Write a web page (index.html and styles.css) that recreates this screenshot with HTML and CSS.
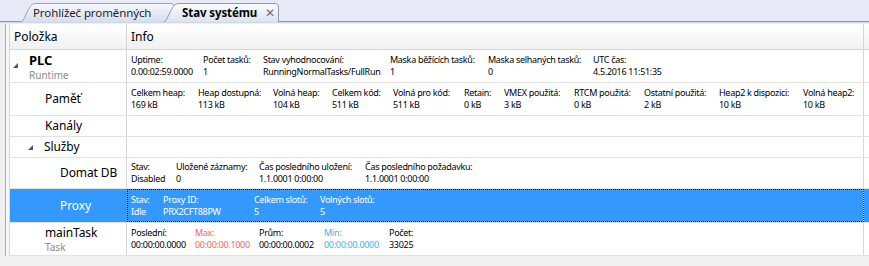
FILE: index.html
```html
<!DOCTYPE html>
<html>
<head lang="cs">
    <meta charset="UTF-8">
    <title>Stav systému</title>
    <link rel="stylesheet" href="styles.css">
</head>
<body>
<div class="tabs">
    <div class="tab tab-vars">
        <svg class="tab-shape" width="155" height="19" viewBox="0 0 155 19">
            <defs>
                <linearGradient id="g1" x1="0" y1="0" x2="0" y2="1">
                    <stop offset="0" stop-color="#f6f8fc"/>
                    <stop offset="1" stop-color="#d6deec"/>
                </linearGradient>
            </defs>
            <path d="M0.5 19 C5 19 8 0.5 15 0.5 H151 Q154.5 0.5 154.5 4 V19" fill="url(#g1)" stroke="#98a3b6"/>
        </svg>
        <span class="tab-text">Prohlížeč proměnných</span>
    </div>
    <div class="tab tab-state">
        <svg class="tab-shape" width="116" height="19" viewBox="0 0 116 19">
            <defs>
                <linearGradient id="g2" x1="0" y1="0" x2="0" y2="1">
                    <stop offset="0" stop-color="#fbfcfe"/>
                    <stop offset="1" stop-color="#dbe3f0"/>
                </linearGradient>
            </defs>
            <path d="M0.5 19 C5 19 8 0.5 15 0.5 H112 Q115.5 0.5 115.5 4 V19" fill="url(#g2)" stroke="#8e99ad"/>
        </svg>
        <span class="tab-text">Stav systému</span>
        <span class="tab-close">✕</span>
    </div>
</div>

<div class="panel">
    <div class="frame">
        <div class="grid">
            <div class="row head">
                <div class="c1">Položka</div>
                <div class="c2">Info</div>
                <div class="c3"></div>
            </div>

            <div class="row r-plc">
                <div class="c1 lv0 top">
                    <span class="exp"><svg width="5" height="5"><path d="M5 0V5H0Z" fill="#555"/></svg></span>
                    <div class="name">
                        <div class="title bold">PLC</div>
                        <div class="sub">Runtime</div>
                    </div>
                </div>
                <div class="c2 info i-plc">
                    <div class="item"><span>Uptime:</span><span>0.00:02:59.0000</span></div>
                    <div class="item"><span>Počet tasků:</span><span>1</span></div>
                    <div class="item"><span>Stav vyhodnocování:</span><span>RunningNormalTasks/FullRun</span></div>
                    <div class="item"><span>Maska běžících tasků:</span><span>1</span></div>
                    <div class="item"><span>Maska selhaných tasků:</span><span>0</span></div>
                    <div class="item"><span>UTC čas:</span><span>4.5.2016 11:51:35</span></div>
                </div>
                <div class="c3"></div>
            </div>

            <div class="row r-mem">
                <div class="c1 lv1"><span class="exp"></span><div class="title">Paměť</div></div>
                <div class="c2 info i-mem">
                    <div class="item"><span>Celkem heap:</span><span>169 kB</span></div>
                    <div class="item"><span>Heap dostupná:</span><span>113 kB</span></div>
                    <div class="item"><span>Volná heap:</span><span>104 kB</span></div>
                    <div class="item"><span>Celkem kód:</span><span>511 kB</span></div>
                    <div class="item"><span>Volná pro kód:</span><span>511 kB</span></div>
                    <div class="item"><span>Retain:</span><span>0 kB</span></div>
                    <div class="item"><span>VMEX použitá:</span><span>3 kB</span></div>
                    <div class="item"><span>RTCM použitá:</span><span>0 kB</span></div>
                    <div class="item"><span>Ostatní použitá:</span><span>2 kB</span></div>
                    <div class="item"><span>Heap2 k dispozici:</span><span>10 kB</span></div>
                    <div class="item"><span>Volná heap2:</span><span>10 kB</span></div>
                </div>
                <div class="c3"></div>
            </div>

            <div class="row r-short">
                <div class="c1 lv1"><span class="exp"></span><div class="title">Kanály</div></div>
                <div class="c2"></div>
                <div class="c3"></div>
            </div>

            <div class="row r-short r-svc">
                <div class="c1 lv0b">
                    <span class="exp"><svg width="5" height="5"><path d="M5 0V5H0Z" fill="#555"/></svg></span>
                    <div class="title">Služby</div>
                </div>
                <div class="c2"></div>
                <div class="c3"></div>
            </div>

            <div class="row r-db">
                <div class="c1 lv2"><span class="exp"></span><div class="title">Domat DB</div></div>
                <div class="c2 info i-db">
                    <div class="item"><span>Stav:</span><span>Disabled</span></div>
                    <div class="item"><span>Uložené záznamy:</span><span>0</span></div>
                    <div class="item"><span>Čas posledního uložení:</span><span>1.1.0001 0:00:00</span></div>
                    <div class="item"><span>Čas posledního požadavku:</span><span>1.1.0001 0:00:00</span></div>
                </div>
                <div class="c3"></div>
            </div>

            <div class="row r-proxy selected">
                <div class="c1 lv2"><span class="exp"></span><div class="title">Proxy</div></div>
                <div class="c2 info i-proxy focus">
                    <div class="item"><span>Stav:</span><span>Idle</span></div>
                    <div class="item"><span>Proxy ID:</span><span>PRX2CFT88PW</span></div>
                    <div class="item"><span>Celkem slotů:</span><span>5</span></div>
                    <div class="item"><span>Volných slotů:</span><span>5</span></div>
                </div>
                <div class="c3"></div>
            </div>

            <div class="row r-task">
                <div class="c1 lv1 top">
                    <span class="exp"></span>
                    <div class="name">
                        <div class="title">mainTask</div>
                        <div class="sub">Task</div>
                    </div>
                </div>
                <div class="c2 info i-task">
                    <div class="item"><span>Poslední:</span><span>00:00:00.0000</span></div>
                    <div class="item max"><span>Max:</span><span>00:00:00.1000</span></div>
                    <div class="item"><span>Prům:</span><span>00:00:00.0002</span></div>
                    <div class="item min"><span>Min:</span><span>00:00:00.0000</span></div>
                    <div class="item"><span>Počet:</span><span>33025</span></div>
                </div>
                <div class="c3"></div>
            </div>
        </div>
    </div>
</div>
</body>
</html>
```

FILE: styles.css
```css
* {
    margin: 0;
    padding: 0;
    box-sizing: border-box;
}
body {
    width: 869px;
    height: 266px;
    overflow: hidden;
    background-color: #f0f0f0;
    font-family: "Noto Sans", "Open Sans", sans-serif;
    color: #000;
}

/* záložky */
.tabs {
    height: 22px;
    display: flex;
    padding-left: 20px;
    background-color: #e8ebf7;
    border-bottom: 1px solid #8f97a8;
}
.tab {
    position: relative;
    height: 19px;
    margin-top: 3px;
    display: flex;
    align-items: center;
    font-size: 11.5px;
    letter-spacing: -0.1px;
    white-space: nowrap;
}
.tab-shape {
    position: absolute;
    left: 0;
    top: 0;
}
.tab-text,
.tab-close {
    position: relative;
}
.tab-vars {
    width: 155px;
    padding-left: 13px;
    color: #1e1e1e;
}
.tab-state {
    width: 116px;
    margin-left: -12px;
    padding-left: 19px;
    font-weight: bold;
}
.tab-close {
    margin-left: 8px;
    font-size: 12px;
    font-weight: normal;
    color: #6a7080;
}

/* panel */
.panel {
    border-top: 1px solid #cdd6ea;
    padding-top: 1px;
    background-color: #f0f0f0;
}
.frame {
    margin-left: 5px;
    border-left: 1px solid #a9a9a9;
    padding-left: 3px;
    background-color: #f7f7f7;
}
.grid {
    border-left: 1px solid #d6d6d6;
}
.row {
    display: grid;
    grid-template-columns: 117px 737px 1fr;
    background-color: #fff;
    border-bottom: 1px solid #e2e2e2;
}
.c1 {
    display: flex;
    align-items: center;
    border-right: 1px solid #d6d6d6;
    font-size: 12px;
}
.c2 {
    border-right: 1px solid #d6d6d6;
}
.head {
    height: 26px;
    background: linear-gradient(#ffffff, #f1f1f1);
    border-bottom: 1px solid #d5d5d5;
    font-size: 12px;
}
.head .c1,
.head .c2 {
    display: flex;
    align-items: center;
    padding-left: 4px;
}

.r-plc { height: 33px; }
.r-mem { height: 33px; }
.r-short { height: 21px; }
.r-db { height: 31px; }
.r-proxy { height: 34px; }
.r-task { height: 33px; }
.r-svc { height: 21px; }

/* stromový sloupec */
.lv0 { padding-left: 3px; }
.lv0b { padding-left: 18px; }
.lv1 { padding-left: 19px; }
.lv2 { padding-left: 34px; }
.exp {
    width: 16px;
    flex: none;
    display: flex;
}
.top {
    align-items: flex-start;
    padding-top: 2px;
}
.lv0.top .exp {
    margin-top: 11px;
}
.r-svc .exp svg {
    margin-top: 1px;
}
.title {
    font-size: 12px;
    line-height: 16px;
    letter-spacing: -0.1px;
    white-space: nowrap;
}
.bold {
    font-size: 13px;
    line-height: 17px;
    font-weight: bold;
}
.sub {
    font-size: 10px;
    line-height: 13px;
    color: #8c8c8c;
}

/* informace */
.info {
    display: grid;
    align-content: center;
    padding-left: 4px;
    font-size: 9px;
    letter-spacing: -0.3px;
    line-height: 12px;
    white-space: nowrap;
}
.item span {
    display: block;
}
.i-plc { grid-template-columns: 72px 60px 127px 98px 105px auto; }
.i-mem { grid-template-columns: 67px 75px 59px 61px 71px 40px 70px 70px 75px 84px auto; }
.i-db { grid-template-columns: 45px 83px 106px auto; }
.i-proxy { grid-template-columns: 32px 91px 66px auto; }
.i-task { grid-template-columns: 64px 64px 65px 65px auto; }
.max { color: #f2665a; }
.min { color: #3bb3ee; }

.selected {
    background-color: #3399ff;
    color: #fff;
}
.selected .c1 {
    border-right-color: #3399ff;
}
.focus {
    outline: 1px dotted #1a1a1a;
    outline-offset: -1px;
}
```
